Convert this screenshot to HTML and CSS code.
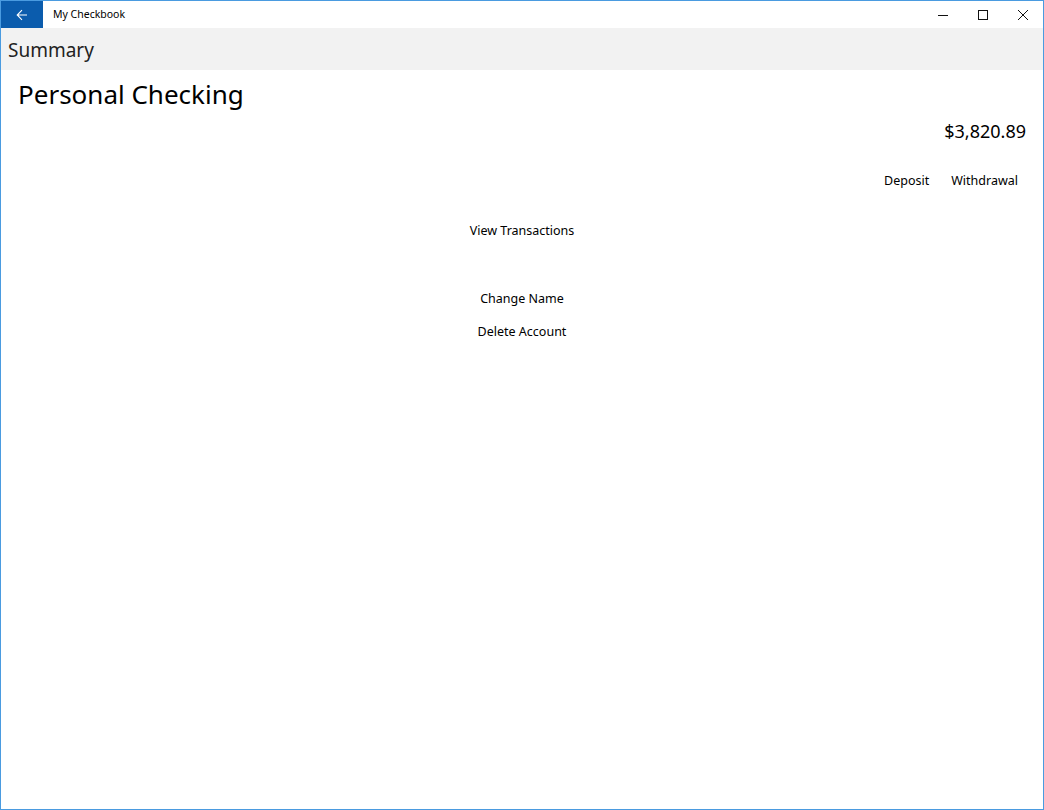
FILE: index.html
```html
<!DOCTYPE html>
<html lang="en">
<head>
  <meta charset="UTF-8" />
  <title>My Checkbook</title>
  <link rel="stylesheet" href="styles.css">
</head>
<body>
  <div class="window">
    <div class="titlebar">
      <div class="back-btn">
        <svg width="12" height="12" viewBox="0 0 12 12"><path d="M11 6H1.5M6 1.2L1.2 6L6 10.8" fill="none" stroke="#fff" stroke-width="1.1"/></svg>
      </div>
      <div class="app-title">My Checkbook</div>
      <div class="caption">
        <div class="cap-btn"><svg width="10" height="10" viewBox="0 0 10 10"><path d="M0 5.5H10" stroke="#111" stroke-width="1"/></svg></div>
        <div class="cap-btn"><svg width="10" height="10" viewBox="0 0 10 10"><rect x="0.5" y="0.5" width="9" height="9" fill="none" stroke="#111" stroke-width="1"/></svg></div>
        <div class="cap-btn"><svg width="10" height="10" viewBox="0 0 10 10"><path d="M0 0L10 10M10 0L0 10" stroke="#111" stroke-width="1"/></svg></div>
      </div>
    </div>

    <div class="page-header">Summary</div>

    <div class="content">
      <h1 class="account-name">Personal Checking</h1>
      <div class="balance">$3,820.89</div>
      <div class="actions">
        <button class="link-btn">Deposit</button>
        <button class="link-btn">Withdrawal</button>
      </div>
      <div class="center-actions">
        <button class="link-btn">View Transactions</button>
      </div>
      <div class="center-actions manage">
        <button class="link-btn">Change Name</button>
        <button class="link-btn">Delete Account</button>
      </div>
    </div>
  </div>
</body>
</html>
```

FILE: styles.css
```css
html, body {
  margin: 0;
  padding: 0;
}

body {
  font-family: 'Segoe UI', 'Noto Sans', sans-serif;
  color: #000;
  background: #fff;
}

.window {
  box-sizing: border-box;
  width: 1044px;
  height: 810px;
  border: 1px solid #4a9be0;
  display: flex;
  flex-direction: column;
}

.titlebar {
  height: 27px;
  display: flex;
  align-items: center;
  background: #fff;
}

.back-btn {
  width: 42px;
  height: 27px;
  background: #0b5cad;
  display: flex;
  align-items: center;
  justify-content: center;
}

.app-title {
  font-size: 10.5px;
  margin-left: 10px;
  margin-top: -1px;
  flex: 1;
  color: #000;
}

.caption {
  display: flex;
  height: 27px;
}

.cap-btn {
  width: 40px;
  display: flex;
  align-items: center;
  justify-content: center;
}

.page-header {
  height: 42px;
  background: #f2f2f2;
  font-size: 19px;
  color: #222;
  padding-left: 7px;
  line-height: 45px;
}

.content {
  display: flex;
  flex-direction: column;
  padding: 0 17px;
}

.account-name {
  font-size: 26px;
  font-weight: normal;
  margin: 5px 0 0 0;
  line-height: 38px;
}

.balance {
  text-align: right;
  font-size: 18px;
  line-height: 26px;
  margin-top: 5px;
}

.actions {
  display: flex;
  justify-content: flex-end;
  margin-top: 20px;
}

.link-btn {
  font-family: inherit;
  font-size: 12.5px;
  background: none;
  border: none;
  padding: 0 8px;
  height: 32px;
  color: #000;
  cursor: pointer;
}

.actions .link-btn + .link-btn {
  margin-left: 6px;
}

.center-actions {
  display: flex;
  flex-direction: column;
  align-items: center;
  margin-top: 18px;
}

.center-actions.manage {
  margin-top: 36px;
}

.center-actions.manage .link-btn {
  height: 33px;
}
```
